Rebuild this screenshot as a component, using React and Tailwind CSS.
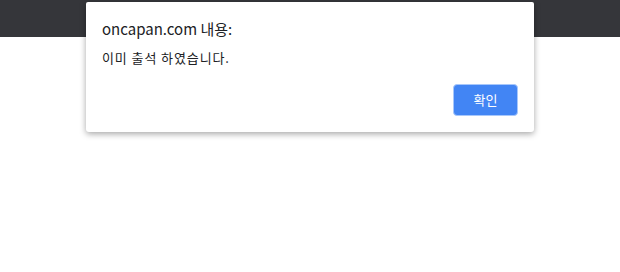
import React from "react";

const App = () => {
  return (
    <div
      className="relative w-[620px] h-[272px] bg-white overflow-hidden"
      style={{ fontFamily: '"Noto Sans CJK KR", "Noto Sans", sans-serif' }}
    >
      {/* browser top bar */}
      <div className="h-[37px] bg-[#35363a]" />

      {/* alert dialog */}
      <div className="absolute left-[86px] top-[2px] w-[448px] h-[130px] bg-white rounded-b-[3px] rounded-t-[2px] shadow-[0_2px_6px_rgba(0,0,0,0.35)] flex flex-col px-4 pt-[18px] pb-4">
        <div className="text-[15px] leading-[18px] text-[#202124]">oncapan.com 내용:</div>
        <div className="mt-[12px] text-[13px] leading-[16px] tracking-[0.9px] text-[#202124]">이미 출석 하였습니다.</div>
        <div className="mt-auto flex justify-end">
          <button className="w-[65px] h-[32px] rounded-[4px] bg-[#4285f4] border border-[#a7c7fb] text-white text-[13px]">
            확인
          </button>
        </div>
      </div>
    </div>
  );
};

export default App;
